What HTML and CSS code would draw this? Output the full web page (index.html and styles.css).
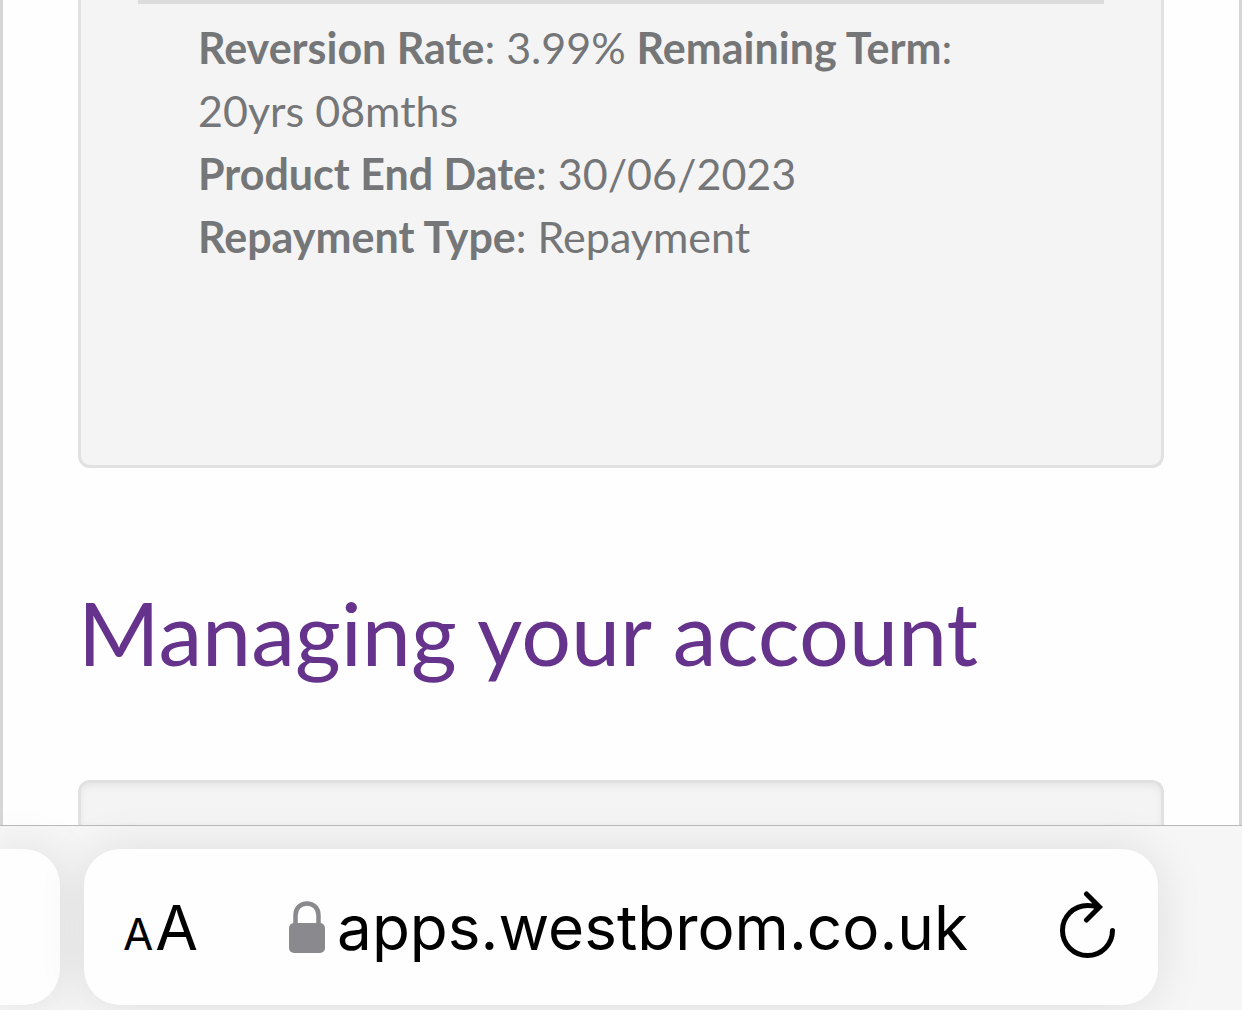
FILE: index.html
```html
<!DOCTYPE html>
<html lang="en">
<head>
<meta charset="utf-8">
<meta name="viewport" content="width=device-width, initial-scale=1">
<title>Managing your account</title>
<link rel="stylesheet" href="styles.css">
</head>
<body>
<main class="page">
  <section class="card card-details">
    <hr class="divider">
    <div class="details">
      <p><strong>Reversion Rate</strong>: 3.99% <strong>Remaining Term</strong>: 20yrs 08mths</p>
      <p><strong>Product End Date</strong>: 30/06/2023</p>
      <p><strong>Repayment Type</strong>: Repayment</p>
    </div>
  </section>
  <h1 class="heading">Managing your account</h1>
  <section class="card card-next"></section>
</main>
<footer class="toolbar">
  <div class="tab-edge"></div>
  <div class="address-bar">
    <button class="text-size" type="button" aria-label="Page settings"><span class="small-a">A</span><span class="large-a">A</span></button>
    <div class="address">
      <svg class="lock" viewBox="0 0 36 52" aria-hidden="true">
        <rect x="0" y="22" width="36" height="30" rx="5" fill="#8a898e"/>
        <path d="M6.500 24V14.500C6.500 7 11.500 2.500 18 2.500S29.500 7 29.500 14.500V24" fill="none" stroke="#8a898e" stroke-width="4.500"/>
      </svg>
      <input class="url" type="text" aria-label="Address" value="apps.westbrom.co.uk" spellcheck="false">
    </div>
    <button class="reload" type="button" aria-label="Reload">
      <svg viewBox="0 0 56 72" aria-hidden="true">
        <path d="M52.500 39.500A25 25 0 1 1 27.500 14.500Q33 14.500 38 16M26.500 3L39.500 16L26.500 29" fill="none" stroke="#000" stroke-width="5" stroke-linecap="round" stroke-linejoin="miter"/>
      </svg>
    </button>
  </div>
</footer>
</body>
</html>
```
FILE: styles.css
```css
* {
  box-sizing: border-box;
}

body {
  margin: 0;
  min-height: 100vh;
  display: flex;
  flex-direction: column;
  overflow: hidden;
  background: #fefefe;
  color: #757678;
  font-family: Lato, "Open Sans", sans-serif;
}

.page {
  flex: 1;
  display: flex;
  flex-direction: column;
  padding: 0 75px;
  border: solid #d6d6d6;
  border-width: 0 3px;
}

.card {
  background: #f4f4f4;
  border: 3px solid #e1e1e1;
}

.card-details {
  border-top: 0;
  border-radius: 0 0 12px 12px;
  padding: 0 57px 197px;
}

.divider {
  height: 4px;
  margin: 0 0 12px;
  border: 0;
  background: #dcdcdc;
}

.details {
  padding: 0 60px;
  font-size: 43px;
  line-height: 63px;
}

.details p {
  margin: 0;
}

.details strong {
  font-weight: 700;
}

.heading {
  margin: 110px 0 94px;
  color: #65328c;
  font-size: 88px;
  font-weight: 400;
  line-height: 108px;
  white-space: nowrap;
}

.card-next {
  flex: 1;
  border-bottom: 0;
  border-radius: 12px 12px 0 0;
  box-shadow: inset 0 3px 6px #e6e6e6;
}

.toolbar {
  display: flex;
  gap: 24px;
  padding: 23px 84px 5px 0;
  border-top: 1px solid #b9b9bb;
  background: #f6f6f6;
}

.tab-edge,
.address-bar {
  background: #fefefe;
  box-shadow: 0 0 48px rgba(0, 0, 0, 0.1);
}

.tab-edge {
  width: 60px;
  border-radius: 0 36px 36px 0;
}

.address-bar {
  flex: 1;
  min-width: 0;
  height: 156px;
  display: flex;
  align-items: center;
  justify-content: space-between;
  padding: 0 42px 0 39px;
  border-radius: 36px;
}

button {
  padding: 0;
  border: 0;
  background: none;
  color: #000;
}

.text-size {
  display: flex;
  align-items: baseline;
  gap: 2px;
  padding-top: 8px;
  font-family: Inter, sans-serif;
  font-weight: 400;
  line-height: 72px;
}

.small-a {
  font-size: 44px;
}

.large-a {
  font-size: 62px;
}

.address {
  display: flex;
  align-items: center;
  gap: 12px;
}

.lock {
  width: 36px;
  height: 52px;
}

.url {
  width: 632px;
  height: 80px;
  padding: 0;
  border: 0;
  background: none;
  color: #000;
  font-family: Inter, sans-serif;
  font-size: 62px;
}

.reload svg {
  display: block;
  width: 56px;
  height: 72px;
}
```
